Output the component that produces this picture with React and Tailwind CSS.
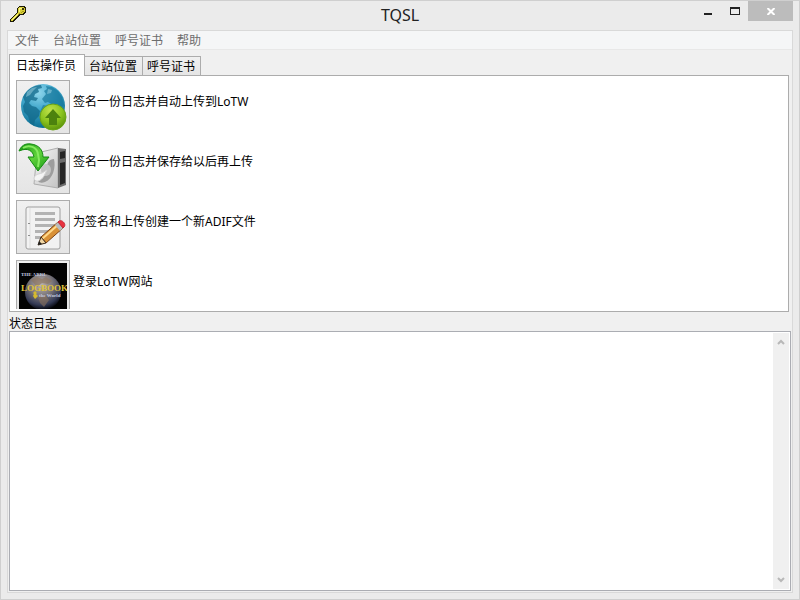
import { useState } from "react";

const menus = ["文件", "台站位置", "呼号证书", "帮助"];
const tabs = ["日志操作员", "台站位置", "呼号证书"];

function KeyIcon() {
  return (
    <svg width="18" height="18" viewBox="0 0 18 18" shapeRendering="crispEdges">
      <path d="M10 1h6v1h1v6h-1v1h-1v1h-4L4 17H1v-3l7-7V3h1V2h1z" fill="#1c1a08" />
      <path d="M10 2h5v1h1v4h-1v1h-1v1h-4l-7 7H2v-2l7-7V3h1z" fill="#d8cf38" />
      <path d="M10 3h3v1h-2v3h-1zM3 14l6-6v1l-6 6z" fill="#f8f58a" />
      <path d="M13 3h2v2h-2z" fill="#3b3609" />
      <path d="M14 6h1v1h-2v1h-2v1l-2 1V9l2-1z" fill="#a79b18" />
    </svg>
  );
}

function GlobeIcon() {
  return (
    <svg width="48" height="48" viewBox="0 0 48 48">
      <defs>
        <radialGradient id="sea" cx="0.4" cy="0.2" r="0.85">
          <stop offset="0" stopColor="#8fd6ec" />
          <stop offset="0.45" stopColor="#3fa6cb" />
          <stop offset="1" stopColor="#06688c" />
        </radialGradient>
        <radialGradient id="lime" cx="0.4" cy="0.25" r="0.8">
          <stop offset="0" stopColor="#c0e24a" />
          <stop offset="0.55" stopColor="#8cc41f" />
          <stop offset="1" stopColor="#578f0a" />
        </radialGradient>
      </defs>
      <circle cx="24" cy="23" r="22" fill="url(#sea)" />
      <path d="M4 14C8 6 15 2 22 2l1 3-4 1 1 3-4 2-1 3 4 1-2 3-5-1-2 3 3 3 4 1 4 4-1 5-4 4-1 6-4-3-2-7-4-4-1-6 2-4z" fill="#12688a" opacity="0.75" />
      <path d="M27 3l6 1 6 4 4 6 2 8-3 3-4-4-4 1-5-3-3 1-3-4 4-5-2-3 3-2z" fill="#17789b" opacity="0.7" />
      <path d="M24 22l6 1 5 5-5 7-4-4-5-2z" fill="#12688a" opacity="0.5" />
      <path d="M8 9l5-4 5-1-4 4-3 4-4 2zM29 6l4 1-1 3-4 1z" fill="#c1eaf4" opacity="0.4" />
      <circle cx="34" cy="34" r="13" fill="url(#lime)" stroke="#6aa315" />
      <path d="M34 26l8 9h-4v7h-8v-7h-4z" fill="#4c820e" />
    </svg>
  );
}

function DiskIcon() {
  return (
    <svg width="50" height="48" viewBox="0 0 50 48">
      <defs>
        <linearGradient id="box" x1="0" y1="0" x2="1" y2="1">
          <stop offset="0" stopColor="#f6f6f6" />
          <stop offset="1" stopColor="#c4c4c4" />
        </linearGradient>
        <linearGradient id="arrow" x1="0" y1="0" x2="1" y2="1">
          <stop offset="0" stopColor="#159512" />
          <stop offset="0.5" stopColor="#5fd23b" />
          <stop offset="1" stopColor="#159512" />
        </linearGradient>
      </defs>
      <path d="M19 10l21-5v40l-24-4z" fill="url(#box)" stroke="#adadad" />
      <path d="M40 5l8 1v36l-8 3z" fill="#6d6d6d" />
      <path d="M42 9l5-1v7l-5 1zM42 20l5-1v21l-5 2z" fill="#262626" />
      <path d="M36 16c2 8-1 20-9 23-6 2-9-1-8-6 5 2 10-2 10-8 0-5 2-9 7-9z" fill="#9d9d9d" />
      <ellipse cx="28" cy="27" rx="5" ry="6" fill="#c2c2c2" />
      <path d="M16 36c0-4 4-5 8-6l5-3-3 6c-3 5-8 7-10 3z" fill="#f4f4f4" stroke="#d2d2d2" />
      <path d="M1 8C3 3 7 0 13 1c8 1 12 6 12 13h6L20 28 10 14h6c-1-6-6-10-15-6z" fill="url(#arrow)" stroke="#148b12" />
      <path d="M5 5c6-4 14-1 15 6l1 6-1 7" fill="none" stroke="#86ea60" strokeWidth="2" />
    </svg>
  );
}

function NotesIcon() {
  return (
    <svg width="48" height="48" viewBox="0 0 48 48">
      <rect x="7" y="4" width="34" height="42" rx="2" fill="#f2f2f2" stroke="#9e9e9e" />
      <path d="M11 5v40" stroke="#ddd" />
      <path d="M16 9h20v3H16zM16 15h20v3H16zM16 21h20v3H16zM16 27h18v3H16zM16 33h12v3H16z" fill="#b3b3b3" />
      <path d="M9 20h2v1H9zM9 32h2v1H9z" fill="#8f8f8f" />
      <path d="M22 34l17-15 5 6-17 15z" fill="#d99136" stroke="#7d4315" />
      <path d="M23 36l17-15" stroke="#ffd98a" strokeWidth="2" />
      <path d="M19 42l3-8 5 6z" fill="#f2d7a4" stroke="#3f2a17" />
      <path d="M19 42l1-4 3 3z" fill="#222" />
      <path d="M36 22l3-3 5 6-3 3z" fill="#b9bcbc" />
      <path d="M39 19c3-4 9 2 6 5l-1 1-5-6z" fill="#e8323f" stroke="#c52735" />
    </svg>
  );
}

function LogbookIcon() {
  return (
    <svg width="48" height="48" viewBox="0 0 48 48">
      <defs>
        <radialGradient id="moon" cx="0.45" cy="0.3" r="0.7">
          <stop offset="0" stopColor="#b9b2ae" />
          <stop offset="0.45" stopColor="#7b767a" />
          <stop offset="0.8" stopColor="#343a55" />
          <stop offset="1" stopColor="#05060c" />
        </radialGradient>
      </defs>
      <path d="M0 0h48v48H0z" fill="#030303" />
      <circle cx="24" cy="29" r="18" fill="url(#moon)" />
      <path d="M12 17l6-3 5 2 4-2 6 4-4 3-6-1-5 4zM19 34l7-2 4 5-5 7-4-4z" fill="#8b725c" opacity="0.6" />
      <text x="2" y="13" fontFamily="Liberation Serif, serif" fontSize="5" fontWeight="bold" fill="#c6cce0">THE ARRL</text>
      <text x="2" y="28" fontFamily="Liberation Serif, serif" fontSize="9" fontWeight="bold" fill="#e0c33a">LOGBOOK</text>
      <path d="M16 28l2 2-1 1 2 2-3 3-2-3 1-2-1-1z" fill="#d5ba2f" />
      <text x="20" y="34" fontFamily="Liberation Serif, serif" fontSize="5" fontWeight="bold" fill="#c6cce0">the World</text>
    </svg>
  );
}

const actions = [
  { label: "签名一份日志并自动上传到LoTW", icon: <GlobeIcon /> },
  { label: "签名一份日志并保存给以后再上传", icon: <DiskIcon /> },
  { label: "为签名和上传创建一个新ADIF文件", icon: <NotesIcon /> },
  { label: "登录LoTW网站", icon: <LogbookIcon /> },
];

function TitleBar() {
  return (
    <header className="grid h-[29px] grid-cols-3 items-start">
      <div className="pt-1 pl-2">
        <KeyIcon />
      </div>
      <h1 className="pt-0.5 text-center text-base text-[#222]">TQSL</h1>
      <div className="flex justify-end pr-1.5">
        <button aria-label="最小化" className="flex h-5 w-7 items-center justify-center">
          <svg width="8" height="10"><path d="M0 7h8v2H0z" fill="#222" /></svg>
        </button>
        <button aria-label="最大化" className="flex h-5 w-[26px] items-center justify-center">
          <svg width="10" height="8"><path d="M0 0h10v8H0zM1 2v5h8V2z" fill="#222" fillRule="evenodd" /></svg>
        </button>
        <button aria-label="关闭" className="flex h-5 w-[45px] items-center justify-center bg-[#bcbcbc]">
          <svg width="8" height="7"><path d="M0.5 0L7.5 7M7.5 0L0.5 7" stroke="#fff" strokeWidth="2" /></svg>
        </button>
      </div>
    </header>
  );
}

function Chevron({ d }) {
  return (
    <svg width="8" height="6" viewBox="0 0 8 6">
      <path d={d} fill="none" stroke="#b8b8b8" strokeWidth="2" />
    </svg>
  );
}

export default function App() {
  const [active, setActive] = useState(0);

  return (
    <div className="flex min-h-screen flex-col border border-[#cfcfcf] bg-[#ebebeb] font-['Noto_Sans','Noto_Sans_CJK_SC',sans-serif] text-xs text-black">
      <TitleBar />
      <main className="mx-1.5 mb-1.5 flex flex-1 flex-col border border-[#d9d9d9] bg-[#f0f0f0]">
        <nav className="flex h-[19px] items-center gap-3.5 border-b border-[#e8e8e8] bg-[#f5f6f7] pt-0.5 pl-[7px] text-[#6d6d6d]">
          {menus.map((m) => (
            <button key={m}>{m}</button>
          ))}
        </nav>

        <div role="tablist" className="flex items-end pt-1 pl-px">
          {tabs.map((t, i) => (
            <button
              key={t}
              role="tab"
              aria-selected={i === active}
              onClick={() => setActive(i)}
              className={
                i === active
                  ? "z-10 -mb-px h-[22px] border border-b-0 border-[#acacac] bg-white pr-2 pl-1.5 whitespace-nowrap"
                  : "h-[19px] border border-b-0 border-l-0 border-[#acacac] bg-linear-to-b from-[#f0f0f0] to-[#e5e5e5] pt-0.5 pr-[5px] pl-1 whitespace-nowrap"
              }
            >
              {t}
            </button>
          ))}
        </div>
        <section role="tabpanel" className="mr-[3px] ml-px h-[237px] border border-[#acacac] bg-white pb-0.5">
          <div className="flex h-full flex-col gap-1.5 overflow-hidden px-1.5 pt-1">
            {actions.map((a) => (
              <div key={a.label} className="flex items-start gap-[3px]">
                <button
                  aria-label={a.label}
                  className="flex size-[54px] shrink-0 items-center justify-center border border-[#acacac] bg-linear-to-b from-[#f0f0f0] to-[#e5e5e5]"
                >
                  {a.icon}
                </button>
                <span className="pt-3.5">{a.label}</span>
              </div>
            ))}
          </div>
        </section>

        <label htmlFor="status-log" className="pt-1 pl-px leading-[15px]">
          状态日志
        </label>
        <div className="mx-px mb-px flex flex-1 border border-[#abadb3] bg-white p-px">
          <textarea id="status-log" readOnly className="flex-1 resize-none outline-none" />
          <div className="flex w-4 flex-col items-center justify-between bg-[#f0f0f0] py-1.5">
            <button aria-label="向上滚动" className="flex">
              <Chevron d="M1 5l3-3 3 3" />
            </button>
            <button aria-label="向下滚动" className="flex">
              <Chevron d="M1 1l3 3 3-3" />
            </button>
          </div>
        </div>
      </main>
    </div>
  );
}
